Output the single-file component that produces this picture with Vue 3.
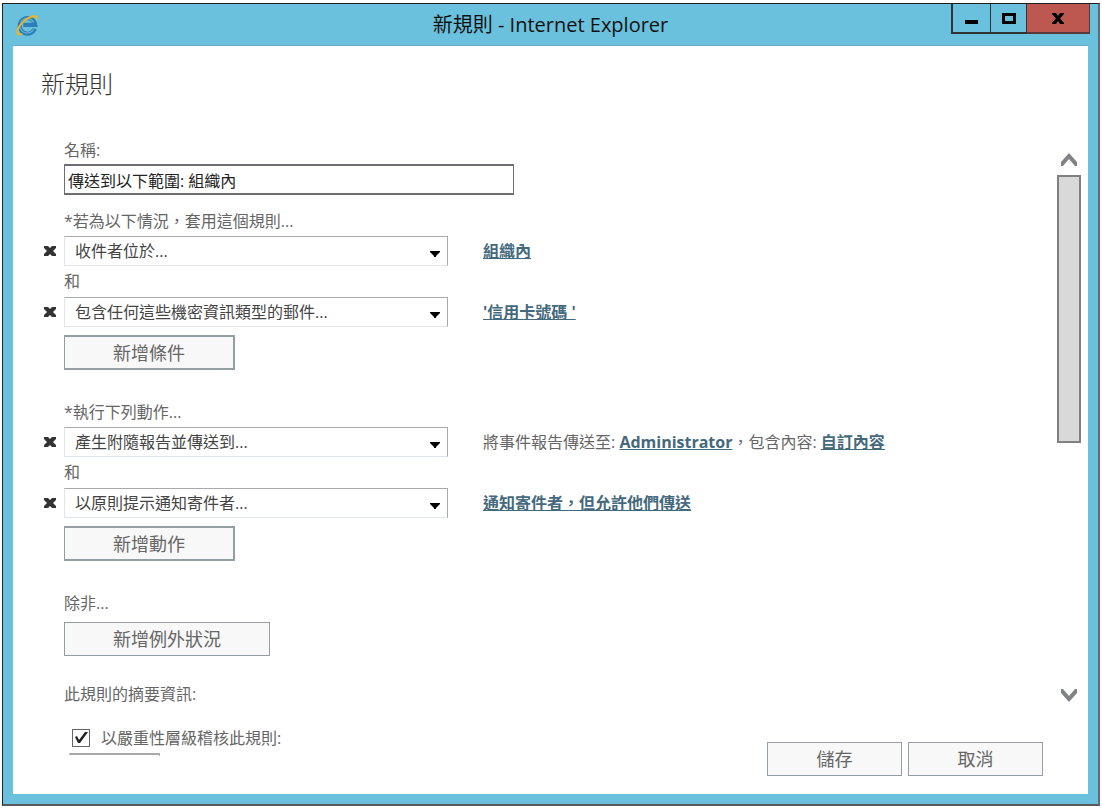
<script setup>
import { ref } from 'vue'

const ruleName = ref('傳送到以下範圍: 組織內')
const audit = ref(true)

const groups = [
  {
    id: 'conditions',
    label: '*若為以下情況，套用這個規則...',
    add: '新增條件',
    rows: [
      { value: '收件者位於...', detail: [{ link: '組織內' }] },
      { value: '包含任何這些機密資訊類型的郵件...', detail: [{ link: "'信用卡號碼 '" }] }
    ]
  },
  {
    id: 'actions',
    label: '*執行下列動作...',
    add: '新增動作',
    rows: [
      {
        value: '產生附隨報告並傳送到...',
        detail: [
          { text: '將事件報告傳送至: ' },
          { link: 'Administrator' },
          { text: '，包含內容: ' },
          { link: '自訂內容' }
        ]
      },
      { value: '以原則提示通知寄件者...', detail: [{ link: '通知寄件者，但允許他們傳送' }] }
    ]
  }
]
</script>

<template>
  <div class="desktop" lang="zh-Hant">
    <div class="window">
      <header class="titlebar">
        <svg class="ie" viewBox="0 0 24 24" aria-hidden="true">
          <path d="M19.8 15.6A7.8 7.8 0 1 1 20.2 11.8H8.2" fill="none" stroke="#2d7fb4" stroke-width="4.2" />
          <path d="M19 15.6A7.4 7.4 0 0 1 5 14M5.6 9.2A7.6 7.6 0 0 1 18.6 9.4" fill="none" stroke="#5fb2dc" stroke-width="1.2" />
          <path d="M4.6 22.6C-1.2 22.2 1.4 13 8.6 7.2C14.6 2 22.6-.2 22.6 4.8C22.6 6 22.2 7.2 21.4 8.4C22 4.8 20 3.2 15.4 5.2C9.600 7.600 3.800 14 3.600 18C3.500 20.600 5.400 21 8.200 20.200C7 21.600 5.800 22.400 4.600 22.600Z" fill="#f0b429" />
        </svg>
        <span class="caption">新規則 - Internet Explorer</span>
        <div class="controls">
          <button type="button" class="ctl min" aria-label="最小化">
            <svg viewBox="0 0 14 12"><path d="M0 8h13v4H0z" /></svg>
          </button>
          <button type="button" class="ctl max" aria-label="最大化">
            <svg viewBox="0 0 14 12"><path fill-rule="evenodd" d="M0 1h14v11H0zM3 4v5h8V4z" /></svg>
          </button>
          <button type="button" class="ctl close" aria-label="關閉">
            <svg viewBox="0 0 14 12"><path d="M1 1h4l2 3 2-3h4v1L9 6.500l4 4.500v1H9L7 9l-2 3H1v-1l4-4.500L1 2z" /></svg>
          </button>
        </div>
      </header>

      <main class="page">
        <h1>新規則</h1>

        <div class="body">
          <form id="rule" class="form" @submit.prevent>
            <label class="label" for="name">名稱:</label>
            <input id="name" v-model="ruleName" class="name" type="text" />

            <section v-for="g in groups" :key="g.id" class="group">
              <div class="label">{{ g.label }}</div>
              <template v-for="(row, i) in g.rows" :key="i">
                <div v-if="i > 0" class="and">和</div>
                <div class="row">
                  <button type="button" class="remove" aria-label="移除">
                    <svg viewBox="0 0 12 10"><path d="M0 0h4l2 2 2-2h4v2L9 5l3 3v2H8L6 8l-2 2H0V8l3-3-3-3z" /></svg>
                  </button>
                  <span class="pick">
                    <select :aria-label="g.label">
                      <option>{{ row.value }}</option>
                    </select>
                    <svg class="caret" viewBox="0 0 10 6" aria-hidden="true"><path d="M0 0h10v1L6 5v1H4V5L0 1z" /></svg>
                  </span>
                  <span class="detail">
                    <template v-for="(part, j) in row.detail" :key="j">
                      <a v-if="part.link" href="#">{{ part.link }}</a>
                      <template v-else>{{ part.text }}</template>
                    </template>
                  </span>
                </div>
              </template>
              <button type="button" class="btn add">{{ g.add }}</button>
            </section>

            <section class="group">
              <div class="label">除非...</div>
              <button type="button" class="btn add">新增例外狀況</button>
            </section>

            <section class="group summary">
              <div class="label">此規則的摘要資訊:</div>
              <label class="check">
                <span class="tick">
                  <input v-model="audit" type="checkbox" />
                  <svg v-if="audit" viewBox="0 0 18 18" aria-hidden="true"><path d="M3 8l2-1 2 4 6-8h3L8 14H6z" /></svg>
                </span>
                以嚴重性層級稽核此規則:
              </label>
              <select class="severity" aria-label="嚴重性層級"></select>
            </section>
          </form>

          <div class="scroll">
            <button type="button" aria-label="向上捲動">
              <svg viewBox="0 0 16 13"><path d="M0 9l8-9 8 9v4h-2L8 6l-6 7H0z" /></svg>
            </button>
            <div class="track"><div class="thumb"></div></div>
            <button type="button" aria-label="向下捲動">
              <svg viewBox="0 0 16 13"><path d="M0 0h2l6 7 6-7h2v4l-8 9-8-9z" /></svg>
            </button>
          </div>
        </div>

        <footer class="footer">
          <button type="submit" form="rule" class="btn">儲存</button>
          <button type="button" class="btn">取消</button>
        </footer>
      </main>
    </div>
  </div>
</template>

<style>
body {
  margin: 0;
  background: #fff;
}
</style>

<style scoped>
* {
  box-sizing: border-box;
}

.desktop {
  display: flex;
  min-height: 100vh;
  padding: 3px 2px;
  color: #666;
  font: 16px/22px "Open Sans", "Noto Sans CJK TC", sans-serif;
}

button,
input,
select {
  margin: 0;
  padding: 0;
  font: inherit;
  color: inherit;
  border-radius: 0;
}

svg {
  display: block;
  fill: currentColor;
}

.window {
  flex: 1;
  display: flex;
  flex-direction: column;
  background: #6ac1dd;
  border: 1px solid #231f20;
  border-right: 2px solid #67696c;
  border-bottom: 2px solid #58595b;
  padding: 0 10px 10px;
}

.titlebar {
  display: grid;
  grid-template-columns: 1fr auto 1fr;
  align-items: center;
  height: 41px;
}

.ie {
  width: 24px;
  height: 24px;
  margin-left: 2px;
}

.caption {
  color: #111;
  font-size: 20px;
  line-height: 28px;
}

.controls {
  display: flex;
  align-self: start;
  justify-self: end;
  height: 30px;
  margin-right: -2px;
  border-left: 2px solid #333;
}

.ctl {
  display: grid;
  place-items: center;
  width: 38px;
  border: 0;
  border-right: 1px solid #333;
  border-bottom: 2px solid #333;
  background: #6ac1dd;
  color: #000;
}

.ctl.max {
  width: 36px;
}

.ctl svg {
  width: 14px;
  height: 12px;
}

.ctl.close {
  width: 63px;
  background: #bc5850;
  border-color: #59383a;
}

.page {
  flex: 1;
  display: flex;
  flex-direction: column;
  background: #fff;
  border-top: 1px solid #6ea9c4;
  padding: 22px 7px 18px 28px;
}

h1 {
  margin: 0 0 39px;
  color: #333;
  font-size: 24px;
  line-height: 32px;
  font-weight: 300;
}

.body {
  flex: 1 0 600px;
  height: 600px;
  display: flex;
}

.form {
  flex: 1;
  min-width: 0;
  overflow: hidden;
}

.form > .label,
.name,
.group {
  margin-left: 23px;
}

.label {
  display: block;
  line-height: 22px;
}

.name {
  display: block;
  width: 450px;
  max-width: 100%;
  height: 31px;
  margin-top: 3px;
  margin-bottom: 15px;
  padding: 0 3px;
  border: 2px solid #6d6e71;
  border-width: 2px 1px 2px 1px;
  background: #fff;
  color: #222;
}

.group {
  margin-bottom: 31px;
}

.group .label {
  margin-bottom: 4px;
}

.row {
  display: flex;
  align-items: center;
  margin-left: -20px;
}

.remove {
  flex: none;
  width: 20px;
  height: 20px;
  border: 0;
  background: none;
  color: #333;
}

.remove svg {
  width: 12px;
  height: 10px;
}

.pick {
  position: relative;
  flex: 0 1 384px;
}

.pick select,
.severity {
  display: block;
  appearance: none;
  width: 100%;
  height: 30px;
  padding: 0 24px 0 10px;
  border: 1px solid #a7a9ac;
  border-left-color: #dfe5ea;
  border-bottom-color: #dfe5ea;
  background: #fff;
  color: #444;
}

.caret {
  position: absolute;
  right: 8px;
  top: 15px;
  width: 10px;
  height: 6px;
  color: #000;
  pointer-events: none;
}

.detail {
  margin-left: 35px;
  white-space: pre-wrap;
}

a {
  color: #44697d;
  font-weight: 700;
  text-decoration: underline;
}

.and {
  margin: 4px 0 5px;
}

.btn {
  height: 34px;
  border: 1px solid #939fa1;
  background: #f8f8f8;
  color: #666;
  font-size: 18px;
}

.add {
  display: block;
  padding: 0 48px;
  margin-top: 8px;
}

.row + .add {
  height: 35px;
  border-width: 2px;
  border-left-width: 1px;
}

.summary {
  margin-top: -4px;
  margin-bottom: 0;
}

.check {
  display: flex;
  align-items: center;
  gap: 11px;
  margin: 22px 0 4px 8px;
}

.tick {
  position: relative;
  width: 18px;
  height: 18px;
}

.tick input {
  display: block;
  appearance: none;
  width: 18px;
  height: 18px;
  border: 1px solid #666;
  background: #fff;
}

.tick svg {
  position: absolute;
  inset: 0;
  color: #222;
  pointer-events: none;
}

.severity {
  width: 91px;
  margin-left: 5px;
  border-top-width: 2px;
}

.scroll {
  display: flex;
  flex-direction: column;
  width: 24px;
  margin: 14px 0 54px;
}

.scroll button {
  display: flex;
  justify-content: center;
  border: 0;
  background: none;
  color: #808285;
}

.scroll svg {
  width: 16px;
  height: 13px;
}

.track {
  flex: 1;
  padding: 9px 0;
}

.thumb {
  height: 53%;
  background: #d9d9d9;
  border: 2px solid #808080;
}

.footer {
  display: flex;
  justify-content: flex-end;
  gap: 6px;
  margin: -14px 38px 0 0;
}

.footer .btn {
  width: 135px;
}
</style>
